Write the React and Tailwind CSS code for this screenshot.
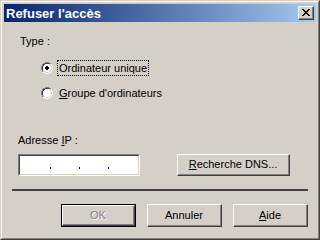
const font = { fontFamily: '"Liberation Sans", Arial, sans-serif' };

// classic 12x12 radio bitmap: G=#808080 D=#404040 L=#d4d0c8 W=white
const radioMap = [
  '....GGGG....',
  '..GGDDDDGG..',
  '.GDDWWWWLLW.',
  '.GDWWWWWWLW.',
  'GDWWWWWWWWLW',
  'GDWWWWWWWWLW',
  'GDWWWWWWWWLW',
  'GDWWWWWWWWLW',
  '.GLWWWWWWLW.',
  '.GLLWWWWLLW.',
  '..WWLLLLWW..',
  '....WWWW....',
];
const radioColors = { G: '#808080', D: '#404040', L: '#d4d0c8', W: '#ffffff' };
const dotMap = ['.XX.', 'XXXX', 'XXXX', '.XX.'];

const Radio = ({ checked }) => (
  <svg width="12" height="12" viewBox="0 0 12 12" shapeRendering="crispEdges" className="shrink-0">
    {radioMap.map((row, y) =>
      row.split('').map((c, x) =>
        c === '.' ? null : <rect key={`${x}-${y}`} x={x} y={y} width="1" height="1" fill={radioColors[c]} />
      )
    )}
    {checked &&
      dotMap.map((row, y) =>
        row.split('').map((c, x) =>
          c === 'X' ? <rect key={`d${x}-${y}`} x={x + 4} y={y + 4} width="1" height="1" fill="#000" /> : null
        )
      )}
  </svg>
);

const Button = ({ children, def, disabled, className = '' }) => (
  <div className={`${def ? 'border border-black' : ''} ${className}`}>
    <div className="h-full border-t border-l border-t-white border-l-white border-r border-b border-r-[#404040] border-b-[#404040]">
      <div className="h-full flex items-center justify-center border-r border-b border-r-[#808080] border-b-[#808080]">
        <span className={disabled ? 'text-[#808080]' : 'text-black'} style={disabled ? { textShadow: '1px 1px 0 #fff' } : undefined}>
          {children}
        </span>
      </div>
    </div>
  </div>
);

export default function App() {
  return (
    <div className="w-[320px] h-[240px] bg-[#d4d0c8] text-[11px] leading-[13px] text-black" style={font}>
      <div className="w-full h-full border border-t-[#d4d0c8] border-l-[#d4d0c8] border-r-[#404040] border-b-[#404040]">
        <div className="w-full h-full border border-t-white border-l-white border-r-[#808080] border-b-[#808080] p-[2px] flex flex-col">
          {/* title bar */}
          <div className="h-[18px] shrink-0 flex items-center justify-between bg-gradient-to-r from-[#0a246a] to-[#a6caf0] pl-[2px] pr-[2px]">
            <span className="text-white font-bold text-[13px] leading-[15px]">Refuser l'accès</span>
            <div className="w-[16px] h-[14px] bg-[#d4d0c8] border-t border-l border-t-white border-l-white border-r border-b border-r-[#404040] border-b-[#404040]">
              <div className="w-full h-full flex items-center justify-center border-r border-b border-r-[#808080] border-b-[#808080]">
                <svg width="8" height="7" viewBox="0 0 8 7">
                  <path d="M0 0h2v1h1v1h2v-1h1v-1h2v1h-1v1h-1v1h-1v1h1v1h1v1h1v1h-2v-1h-1v-1h-2v1h-1v1h-2v-1h1v-1h1v-1h1v-1h-1v-1h-1v-1h-1z" fill="#000" />
                </svg>
              </div>
            </div>
          </div>

          {/* content */}
          <div className="flex flex-col">
            <div className="mt-[13px] ml-[16px]">Type :</div>

            <div className="mt-[12px] ml-[37px] h-[16px] flex items-center gap-[4px]">
              <Radio checked />
              <span className="h-[16px] px-[1px] flex items-center border border-dotted border-black">
                Ordinateur unique
              </span>
            </div>

            <div className="mt-[9px] ml-[37px] h-[16px] flex items-center gap-[4px]">
              <Radio />
              <span className="h-[16px] px-[2px] flex items-center">
                <span className="underline">G</span>roupe d'ordinateurs
              </span>
            </div>

            <div className="mt-[33px] ml-[14px]">
              Adresse <span className="underline">I</span>P :
            </div>

            <div className="mt-[7px] ml-[14px] flex items-center gap-[37px]">
              <div className="w-[122px] h-[22px] bg-white border-t border-l border-t-[#808080] border-l-[#808080] border-r border-b border-r-white border-b-white">
                <div className="w-full h-full border-t border-l border-t-[#404040] border-l-[#404040] border-r border-b border-r-[#d4d0c8] border-b-[#d4d0c8] flex items-center pl-[30px] gap-[28px]">
                  <span className="w-[1px] h-[2px] mt-[6px] bg-[#000080]" />
                  <span className="w-[1px] h-[2px] mt-[6px] bg-[#000080]" />
                  <span className="w-[1px] h-[2px] mt-[6px] bg-[#000080]" />
                </div>
              </div>
              <Button className="w-[113px] h-[22px]">
                <span className="underline">R</span>echerche DNS...
              </Button>
            </div>

            <div className="mt-[13px] ml-[8px] w-[296px] h-[2px] bg-[#404040]" />

            <div className="mt-[13px] mr-[8px] flex justify-end gap-[11px]">
              <Button def disabled className="w-[75px] h-[23px]">OK</Button>
              <Button className="w-[75px] h-[23px]">Annuler</Button>
              <Button className="w-[75px] h-[23px]">
                <span className="underline">A</span>ide
              </Button>
            </div>
          </div>
        </div>
      </div>
    </div>
  );
}
